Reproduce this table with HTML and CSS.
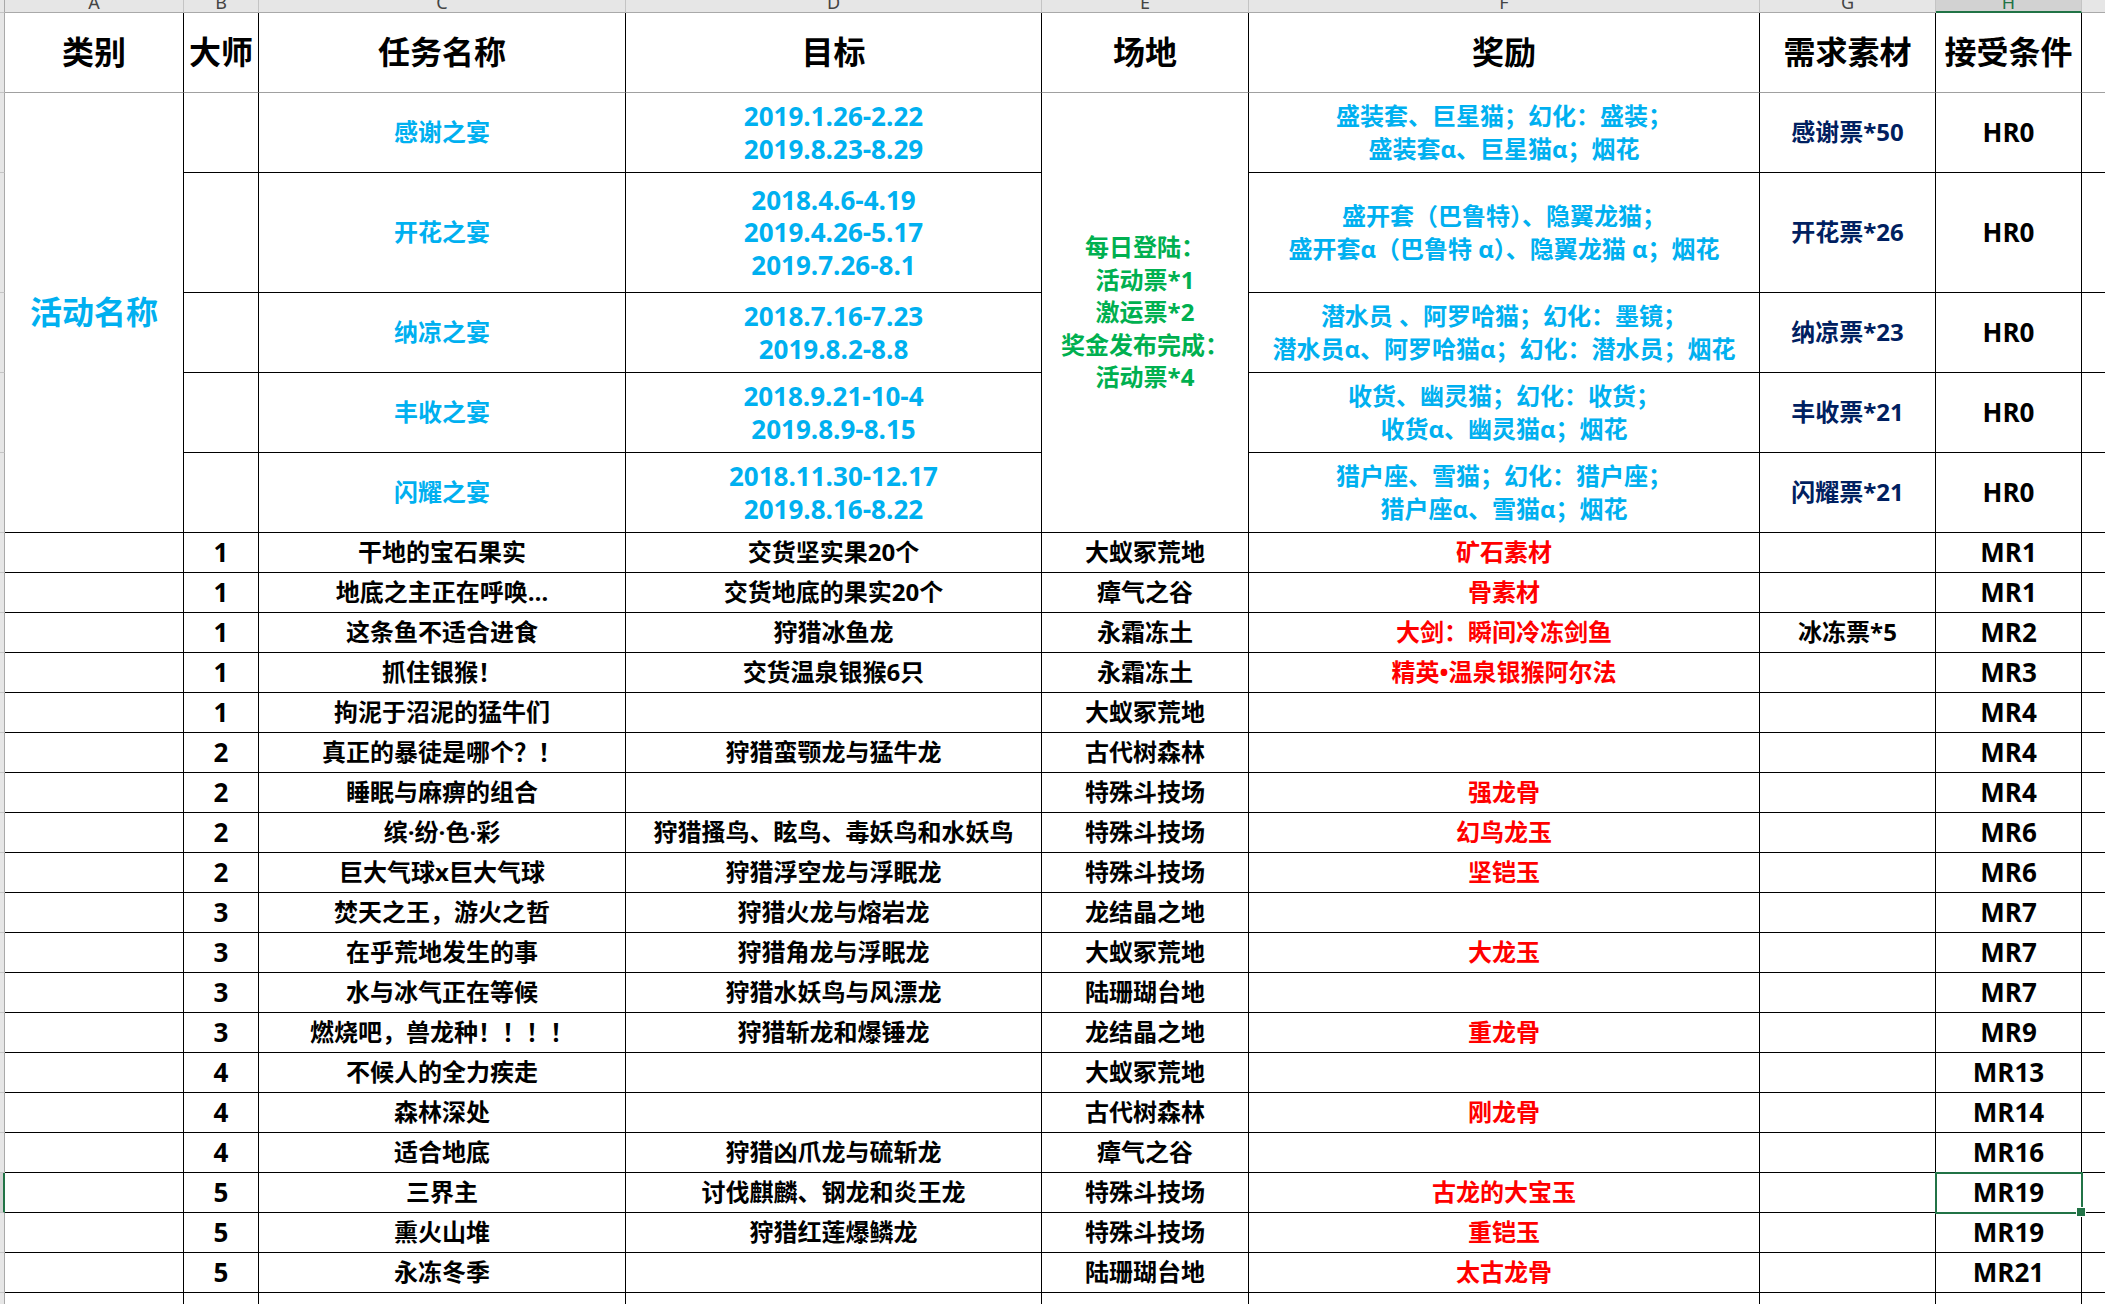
FILE: index.html
```html
<!DOCTYPE html>
<html lang="zh-CN">
<head>
<meta charset="utf-8">
<title>活动任务表</title>
<link rel="stylesheet" href="styles.css">
</head>
<body>
<div class="sheet">
  <div class="rh"></div>
  <div class="ch"><span>A</span></div>
  <div class="ch"><span>B</span></div>
  <div class="ch"><span>C</span></div>
  <div class="ch"><span>D</span></div>
  <div class="ch"><span>E</span></div>
  <div class="ch"><span>F</span></div>
  <div class="ch"><span>G</span></div>
  <div class="ch ch-sel"><span>H</span></div>
  <div class="ch ch-last"></div>

  <div class="rh"></div>
  <div class="c hd">类别</div>
  <div class="c hd">大师</div>
  <div class="c hd">任务名称</div>
  <div class="c hd">目标</div>
  <div class="c hd">场地</div>
  <div class="c hd">奖励</div>
  <div class="c hd">需求素材</div>
  <div class="c hd">接受条件</div>
  <div class="c hd i"></div>

  <div class="rh"></div>
  <div class="c big blue span5">活动名称</div>
  <div class="c"></div>
  <div class="c blue">感谢之宴</div>
  <div class="c blue n"><span>2019.1.26-2.22<br>2019.8.23-8.29</span></div>
  <div class="c green span5"><span>每日登陆：<br>活动票*1<br>激运票*2<br>奖金发布完成：<br>活动票*4</span></div>
  <div class="c blue"><span>盛装套、巨星猫；幻化：盛装；<br>盛装套α、巨星猫α；烟花</span></div>
  <div class="c navy">感谢票*50</div>
  <div class="c n">HR0</div>
  <div class="c i"></div>

  <div class="rh"></div>
  <div class="c"></div>
  <div class="c blue">开花之宴</div>
  <div class="c blue n"><span>2018.4.6-4.19<br>2019.4.26-5.17<br>2019.7.26-8.1</span></div>
  <div class="c blue"><span>盛开套（巴鲁特）、隐翼龙猫；<br>盛开套α（巴鲁特 α）、隐翼龙猫 α；烟花</span></div>
  <div class="c navy">开花票*26</div>
  <div class="c n">HR0</div>
  <div class="c i"></div>

  <div class="rh"></div>
  <div class="c"></div>
  <div class="c blue">纳凉之宴</div>
  <div class="c blue n"><span>2018.7.16-7.23<br>2019.8.2-8.8</span></div>
  <div class="c blue"><span>潜水员 、阿罗哈猫；幻化：墨镜；<br>潜水员α、阿罗哈猫α；幻化：潜水员；烟花</span></div>
  <div class="c navy">纳凉票*23</div>
  <div class="c n">HR0</div>
  <div class="c i"></div>

  <div class="rh"></div>
  <div class="c"></div>
  <div class="c blue">丰收之宴</div>
  <div class="c blue n"><span>2018.9.21-10-4<br>2019.8.9-8.15</span></div>
  <div class="c blue"><span>收货、幽灵猫；幻化：收货；<br>收货α、幽灵猫α；烟花</span></div>
  <div class="c navy">丰收票*21</div>
  <div class="c n">HR0</div>
  <div class="c i"></div>

  <div class="rh"></div>
  <div class="c"></div>
  <div class="c blue">闪耀之宴</div>
  <div class="c blue n"><span>2018.11.30-12.17<br>2019.8.16-8.22</span></div>
  <div class="c blue"><span>猎户座、雪猫；幻化：猎户座；<br>猎户座α、雪猫α；烟花</span></div>
  <div class="c navy">闪耀票*21</div>
  <div class="c n">HR0</div>
  <div class="c i"></div>

  <div class="rh"></div><div class="c"></div><div class="c n">1</div><div class="c">干地的宝石果实</div><div class="c">交货坚实果20个</div><div class="c">大蚁冢荒地</div><div class="c red">矿石素材</div><div class="c"></div><div class="c n">MR1</div><div class="c i"></div>
  <div class="rh"></div><div class="c"></div><div class="c n">1</div><div class="c">地底之主正在呼唤…</div><div class="c">交货地底的果实20个</div><div class="c">瘴气之谷</div><div class="c red">骨素材</div><div class="c"></div><div class="c n">MR1</div><div class="c i"></div>
  <div class="rh"></div><div class="c"></div><div class="c n">1</div><div class="c">这条鱼不适合进食</div><div class="c">狩猎冰鱼龙</div><div class="c">永霜冻土</div><div class="c red">大剑：瞬间冷冻剑鱼</div><div class="c">冰冻票*5</div><div class="c n">MR2</div><div class="c i"></div>
  <div class="rh"></div><div class="c"></div><div class="c n">1</div><div class="c">抓住银猴！</div><div class="c">交货温泉银猴6只</div><div class="c">永霜冻土</div><div class="c red">精英•温泉银猴阿尔法</div><div class="c"></div><div class="c n">MR3</div><div class="c i"></div>
  <div class="rh"></div><div class="c"></div><div class="c n">1</div><div class="c">拘泥于沼泥的猛牛们</div><div class="c"></div><div class="c">大蚁冢荒地</div><div class="c red"></div><div class="c"></div><div class="c n">MR4</div><div class="c i"></div>
  <div class="rh"></div><div class="c"></div><div class="c n">2</div><div class="c">真正的暴徒是哪个？！</div><div class="c">狩猎蛮颚龙与猛牛龙</div><div class="c">古代树森林</div><div class="c red"></div><div class="c"></div><div class="c n">MR4</div><div class="c i"></div>
  <div class="rh"></div><div class="c"></div><div class="c n">2</div><div class="c">睡眠与麻痹的组合</div><div class="c"></div><div class="c">特殊斗技场</div><div class="c red">强龙骨</div><div class="c"></div><div class="c n">MR4</div><div class="c i"></div>
  <div class="rh"></div><div class="c"></div><div class="c n">2</div><div class="c">缤·纷·色·彩</div><div class="c">狩猎搔鸟、眩鸟、毒妖鸟和水妖鸟</div><div class="c">特殊斗技场</div><div class="c red">幻鸟龙玉</div><div class="c"></div><div class="c n">MR6</div><div class="c i"></div>
  <div class="rh"></div><div class="c"></div><div class="c n">2</div><div class="c">巨大气球x巨大气球</div><div class="c">狩猎浮空龙与浮眠龙</div><div class="c">特殊斗技场</div><div class="c red">坚铠玉</div><div class="c"></div><div class="c n">MR6</div><div class="c i"></div>
  <div class="rh"></div><div class="c"></div><div class="c n">3</div><div class="c">焚天之王，游火之哲</div><div class="c">狩猎火龙与熔岩龙</div><div class="c">龙结晶之地</div><div class="c red"></div><div class="c"></div><div class="c n">MR7</div><div class="c i"></div>
  <div class="rh"></div><div class="c"></div><div class="c n">3</div><div class="c">在乎荒地发生的事</div><div class="c">狩猎角龙与浮眠龙</div><div class="c">大蚁冢荒地</div><div class="c red">大龙玉</div><div class="c"></div><div class="c n">MR7</div><div class="c i"></div>
  <div class="rh"></div><div class="c"></div><div class="c n">3</div><div class="c">水与冰气正在等候</div><div class="c">狩猎水妖鸟与风漂龙</div><div class="c">陆珊瑚台地</div><div class="c red"></div><div class="c"></div><div class="c n">MR7</div><div class="c i"></div>
  <div class="rh"></div><div class="c"></div><div class="c n">3</div><div class="c">燃烧吧，兽龙种！！！！</div><div class="c">狩猎斩龙和爆锤龙</div><div class="c">龙结晶之地</div><div class="c red">重龙骨</div><div class="c"></div><div class="c n">MR9</div><div class="c i"></div>
  <div class="rh"></div><div class="c"></div><div class="c n">4</div><div class="c">不候人的全力疾走</div><div class="c"></div><div class="c">大蚁冢荒地</div><div class="c red"></div><div class="c"></div><div class="c n">MR13</div><div class="c i"></div>
  <div class="rh"></div><div class="c"></div><div class="c n">4</div><div class="c">森林深处</div><div class="c"></div><div class="c">古代树森林</div><div class="c red">刚龙骨</div><div class="c"></div><div class="c n">MR14</div><div class="c i"></div>
  <div class="rh"></div><div class="c"></div><div class="c n">4</div><div class="c">适合地底</div><div class="c">狩猎凶爪龙与硫斩龙</div><div class="c">瘴气之谷</div><div class="c red"></div><div class="c"></div><div class="c n">MR16</div><div class="c i"></div>
  <div class="rh rh-sel"></div><div class="c"></div><div class="c n">5</div><div class="c">三界主</div><div class="c">讨伐麒麟、钢龙和炎王龙</div><div class="c">特殊斗技场</div><div class="c red">古龙的大宝玉</div><div class="c"></div><div class="c n sel">MR19</div><div class="c i"></div>
  <div class="rh"></div><div class="c"></div><div class="c n">5</div><div class="c">熏火山堆</div><div class="c">狩猎红莲爆鳞龙</div><div class="c">特殊斗技场</div><div class="c red">重铠玉</div><div class="c"></div><div class="c n">MR19</div><div class="c i"></div>
  <div class="rh"></div><div class="c"></div><div class="c n">5</div><div class="c">永冻冬季</div><div class="c"></div><div class="c">陆珊瑚台地</div><div class="c red">太古龙骨</div><div class="c"></div><div class="c n">MR21</div><div class="c i"></div>
  <div class="rh"></div><div class="c"></div><div class="c"></div><div class="c"></div><div class="c"></div><div class="c"></div><div class="c"></div><div class="c"></div><div class="c"></div><div class="c i"></div>
</div>
</body>
</html>
```

FILE: styles.css
```css
* {
  box-sizing: border-box;
  margin: 0;
  padding: 0;
}

html,
body {
  background: #ffffff;
}

body {
  overflow: hidden;
}

.sheet {
  display: grid;
  grid-template-columns: 5px 179px 75px 367px 416px 207px 511px 176px 146px 23px;
  grid-template-rows: 13px 80px 80px 120px 80px 80px 80px repeat(20, 40px);
  font-family: "Open Sans", "Noto Sans CJK SC", sans-serif;
  font-weight: 700;
  font-size: 24px;
  color: #000000;
}

/* row header stub at the left edge */
.rh {
  background: #e6e6e6;
  border-right: 1px solid #a9a9a9;
  border-bottom: 1px solid #c4c4c4;
}

.rh-sel {
  background: #d2d2d2;
  border-right: 2px solid #217346;
}

/* column letter strip (scrolled so only the lower part of the letters shows) */
.ch {
  background: #e6e6e6;
  border-right: 1px solid #c4c4c4;
  border-bottom: 1px solid #a9a9a9;
  overflow: hidden;
  text-align: center;
  font-family: "Noto Sans", sans-serif;
  font-weight: 400;
  font-size: 18px;
  color: #444444;
}

.ch span {
  display: block;
  line-height: 20px;
  margin-top: -8px;
}

.ch-sel {
  background: #d2d2d2;
  border-bottom: 2px solid #217346;
  color: #217346;
}

.ch-last {
  border-right: none;
}

/* spreadsheet cells */
.c {
  display: flex;
  align-items: center;
  justify-content: center;
  text-align: center;
  white-space: nowrap;
  line-height: 32.5px;
  border-right: 1px solid #000000;
  border-bottom: 1px solid #000000;
}

.c.i {
  border-right: none;
}

.hd {
  font-size: 32px;
  border-bottom-color: #a0a0a0;
}

.big {
  font-size: 32px;
}

.span5 {
  grid-row: span 5;
}

.n {
  font-size: 26px;
}

.blue {
  color: #00b0f0;
}

.green {
  color: #00b050;
}

.navy {
  color: #002060;
}

.red {
  color: #ff0000;
}

.sel {
  position: relative;
  outline: 2px solid #217346;
  outline-offset: -1px;
}

.sel::after {
  content: "";
  position: absolute;
  right: -5px;
  bottom: -5px;
  width: 8px;
  height: 8px;
  background: #217346;
  border: 1px solid #ffffff;
}
```
